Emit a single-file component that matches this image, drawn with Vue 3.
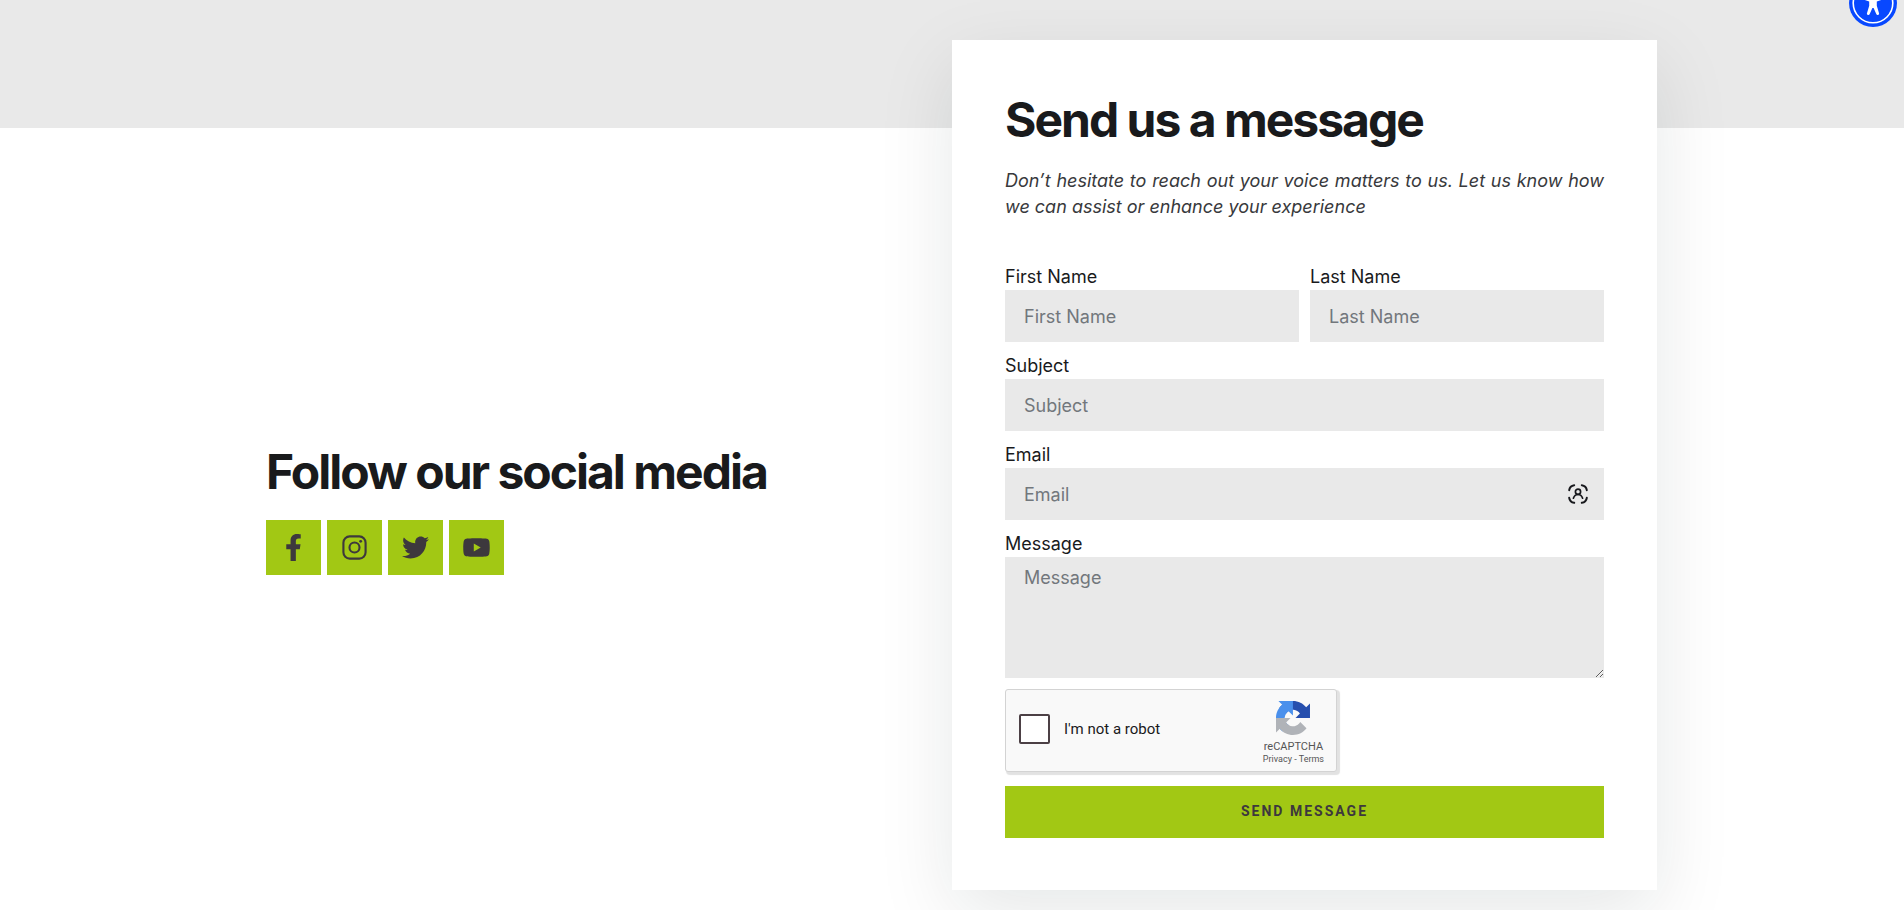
<script setup>
import { reactive, ref } from 'vue';

const form = reactive({
    firstName: '',
    lastName: '',
    subject: '',
    email: '',
    message: '',
});

const notRobot = ref(false);

const socials = [
    {
        name: 'Facebook',
        viewBox: '0 0 320 512',
        path: 'M279.14 288l14.22-92.66h-88.91v-60.13c0-25.35 12.42-50.06 52.24-50.06h40.42V6.26S260.43 0 225.36 0c-73.22 0-121.08 44.38-121.08 124.72v70.62H22.89V288h81.39v224h100.17V288z',
    },
    { name: 'Instagram', viewBox: '0 0 28 28' },
    {
        name: 'Twitter',
        viewBox: '0 0 512 512',
        path: 'M459.37 151.716c.325 4.548.325 9.097.325 13.645 0 138.72-105.583 298.558-298.558 298.558-59.452 0-114.68-17.219-161.137-47.106 8.447.974 16.568 1.299 25.34 1.299 49.055 0 94.213-16.568 130.274-44.832-46.132-.975-84.792-31.188-98.112-72.772 6.498.974 12.995 1.624 19.818 1.624 9.421 0 18.843-1.3 27.614-3.573-48.081-9.747-84.143-51.98-84.143-102.985v-1.299c13.969 7.797 30.214 12.67 47.431 13.319-28.264-18.843-46.781-51.005-46.781-87.391 0-19.492 5.197-37.36 14.294-52.954 51.655 63.675 129.3 105.258 216.365 109.807-1.624-7.797-2.599-15.918-2.599-24.04 0-57.828 46.782-104.934 104.934-104.934 30.213 0 57.502 12.67 76.67 33.137 23.715-4.548 46.456-13.32 66.599-25.34-7.798 24.366-24.366 44.833-46.132 57.827 21.117-2.273 41.584-8.122 60.426-16.243-14.292 20.791-32.161 39.308-52.628 54.253z',
    },
    {
        name: 'YouTube',
        viewBox: '10 0 556 512',
        path: 'M549.655 124.083c-6.281-23.65-24.787-42.276-48.284-48.597C458.781 64 288 64 288 64S117.22 64 74.629 75.486c-23.497 6.322-42.003 24.947-48.284 48.597-11.412 42.867-11.412 132.305-11.412 132.305s0 89.438 11.412 132.305c6.281 23.65 24.787 41.5 48.284 47.821C117.22 448 288 448 288 448s170.78 0 213.371-11.486c23.497-6.321 42.003-24.171 48.284-47.821 11.412-42.867 11.412-132.305 11.412-132.305s0-89.438-11.412-132.305zm-317.51 213.508V175.185l142.739 81.205-142.739 81.201z',
    },
];
</script>

<template>
    <div class="page">
        <div class="band"></div>

        <main class="contact">
            <section class="follow">
                <h2 class="title">Follow our social media</h2>
                <nav class="socials">
                    <a
                        v-for="social in socials"
                        :key="social.name"
                        href="#"
                        class="social"
                        :aria-label="social.name"
                    >
                        <svg class="social-icon" :viewBox="social.viewBox" aria-hidden="true">
                            <path v-if="social.path" :d="social.path" fill="currentColor" />
                            <g v-else fill="none" stroke="currentColor" stroke-width="2.2">
                                <rect x="2.5" y="2.5" width="23" height="23" rx="6.5" />
                                <circle cx="14" cy="14" r="5.2" />
                                <circle cx="20.4" cy="7.6" r="1.5" fill="currentColor" stroke="none" />
                            </g>
                        </svg>
                    </a>
                </nav>
            </section>

            <section class="card">
                <h2 class="title">Send us a message</h2>
                <p class="intro">
                    Don’t hesitate to reach out your voice matters to us. Let us know how we can assist or enhance your experience
                </p>

                <form class="form" @submit.prevent>
                    <div class="row">
                        <div class="field">
                            <label for="first-name">First Name</label>
                            <input id="first-name" v-model="form.firstName" class="control" type="text" placeholder="First Name">
                        </div>
                        <div class="field">
                            <label for="last-name">Last Name</label>
                            <input id="last-name" v-model="form.lastName" class="control" type="text" placeholder="Last Name">
                        </div>
                    </div>
                    <div class="field">
                        <label for="subject">Subject</label>
                        <input id="subject" v-model="form.subject" class="control" type="text" placeholder="Subject">
                    </div>
                    <div class="field">
                        <label for="email">Email</label>
                        <div class="control-wrap">
                            <input id="email" v-model="form.email" class="control" type="email" placeholder="Email">
                            <svg class="autofill" viewBox="0 0 20 20" fill="none" stroke="#17181c" stroke-width="2" stroke-linecap="round" aria-hidden="true">
                                <path d="M1.2 6.2C1.6 3.4 3.4 1.6 6.2 1.2M13.8 1.2c2.8.4 4.6 2.2 5 5M18.8 13.8c-.4 2.8-2.2 4.6-5 5M6.2 18.8c-2.8-.4-4.6-2.2-5-5" />
                                <circle cx="10" cy="7.8" r="2.6" stroke-width="1.7" />
                                <path d="M5.4 14.2c.8-2.4 2.4-3.7 4.6-3.7s3.8 1.3 4.6 3.7" stroke-width="1.7" />
                            </svg>
                        </div>
                    </div>
                    <div class="field">
                        <label for="message">Message</label>
                        <textarea id="message" v-model="form.message" class="control control-area" placeholder="Message"></textarea>
                    </div>

                    <div class="captcha">
                        <input id="not-robot" v-model="notRobot" class="captcha-check" type="checkbox">
                        <label for="not-robot" class="captcha-label">I'm not a robot</label>
                        <div class="captcha-brand">
                            <svg class="captcha-logo" viewBox="0 0 64 64" aria-hidden="true">
                                <path fill="#264fae" d="M64 31.955l-.033-1.37V4.687l-7.16 7.16C50.948 4.674 42.033.093 32.05.093c-10.4 0-19.622 4.96-25.458 12.64l11.736 11.86a15.55 15.55 0 0 1 4.754-5.334c2.05-1.6 4.952-2.906 8.968-2.906.485 0 .86.057 1.135.163 4.976.393 9.288 3.14 11.828 7.124l-8.307 8.307L64 31.953" />
                                <path fill="#4a90ec" d="M31.862.094l-1.37.033H4.594l7.16 7.16C4.58 13.147 0 22.06 0 32.046c0 10.4 4.96 19.622 12.64 25.458L24.5 45.768a15.55 15.55 0 0 1-5.334-4.754c-1.6-2.05-2.906-4.952-2.906-8.968 0-.485.057-.86.163-1.135.393-4.976 3.14-9.288 7.124-11.828l8.307 8.307L31.86.095" />
                                <path fill="#b0b3b8" d="M.001 32.045l.033 1.37v25.898l7.16-7.16c5.86 7.173 14.774 11.754 24.76 11.754 10.4 0 19.622-4.96 25.458-12.64l-11.736-11.86a15.55 15.55 0 0 1-4.754 5.334c-2.05 1.6-4.952 2.906-8.968 2.906-.485 0-.86-.057-1.135-.163-4.976-.393-9.288-3.14-11.828-7.124l8.307-8.307c-10.522.04-22.4.066-27.295-.005" />
                            </svg>
                            <span class="captcha-name">reCAPTCHA</span>
                            <span class="captcha-links"><a href="#">Privacy</a> - <a href="#">Terms</a></span>
                        </div>
                    </div>

                    <button class="submit" type="submit">Send Message</button>
                </form>
            </section>
        </main>

        <button class="accessibility" type="button" aria-label="Accessibility">
            <svg viewBox="0 0 48 48" aria-hidden="true">
                <circle cx="24" cy="24" r="24" fill="#0848ff" />
                <circle cx="24" cy="24" r="19.8" fill="none" stroke="#fff" stroke-width="1.6" />
                <circle cx="24" cy="13.5" r="3" fill="#fff" />
                <path fill="#fff" d="M15.5 18.2l6 1.2h5l6-1.2c1.4-.2 1.8 2.2.4 2.6l-5.1 1.6v4.4l2.3 7.6c.3 1.4-2 2.2-2.7.9L24.6 29h-1.2l-2.8 6.3c-.7 1.3-3 .5-2.7-.9l2.3-7.6v-4.4l-5.1-1.6c-1.4-.4-1-2.8.4-2.6z" />
            </svg>
        </button>
    </div>
</template>

<style>
body {
    margin: 0;
    background: #ffffff;
}
</style>

<style scoped>
.page {
    font-family: Inter, sans-serif;
    font-size: 18px;
    line-height: 27px;
    color: #191a1c;
    padding-bottom: 20px;
}
.page * {
    box-sizing: border-box;
}
.band {
    height: 128px;
    background: #e9e9e9;
}
.contact {
    display: grid;
    grid-template-columns: 1fr 1fr;
    align-items: center;
    max-width: 1410px;
    margin: 0 auto;
}
.follow {
    padding-left: 19px;
}
.title {
    margin: 0;
    font-size: 48px;
    font-weight: 700;
    line-height: 56px;
    letter-spacing: -2px;
}
.socials {
    display: flex;
    gap: 6px;
    margin-top: 20px;
}
.social {
    display: flex;
    align-items: center;
    justify-content: center;
    width: 55px;
    height: 55px;
    background: #a2c814;
    color: #3d383d;
}
.social-icon {
    width: 27px;
    height: 27px;
}
.card {
    position: relative;
    margin-top: -88px;
    padding: 52px 53px;
    background: #ffffff;
    box-shadow: 0 24px 72px rgba(10, 31, 26, 0.1);
}
.intro {
    margin: 20px 0 0;
    font-style: italic;
    line-height: 26px;
    text-align: justify;
    color: #38393c;
}
.form {
    display: flex;
    flex-direction: column;
    gap: 10px;
    margin-top: 43px;
}
.row {
    display: grid;
    grid-template-columns: 1fr 1fr;
    gap: 11px;
}
.field {
    display: flex;
    flex-direction: column;
}
.control {
    display: block;
    width: 100%;
    height: 52px;
    padding: 0 19px;
    border: 0;
    border-radius: 0;
    background: #e9e9e9;
    font: inherit;
    color: #191a1c;
}
.control::placeholder {
    color: #72777c;
    opacity: 1;
}
.control-area {
    height: 121px;
    padding-top: 7px;
    resize: vertical;
}
.control-wrap {
    position: relative;
}
.autofill {
    position: absolute;
    top: 16px;
    right: 16px;
    width: 20px;
    height: 20px;
}
.captcha {
    display: flex;
    align-items: center;
    width: 332px;
    height: 83px;
    margin: 1px 0 4px;
    padding: 0 12px 3px 13px;
    border: 1px solid #d3d3d3;
    border-radius: 3px;
    background: #f9f9f9;
    box-shadow: 2px 2px 1px 1px #e2e2e2;
    font-family: Roboto, sans-serif;
}
.captcha-check {
    appearance: none;
    width: 31px;
    height: 30px;
    margin: 0 14px 0 0;
    border: 2px solid #4c4045;
    border-radius: 2px;
    background: #ffffff;
}
.captcha-label {
    font-size: 15px;
    line-height: 20px;
}
.captcha-brand {
    display: flex;
    flex-direction: column;
    align-items: center;
    margin-left: auto;
    padding-top: 8px;
    color: #555555;
}
.captcha-logo {
    width: 34px;
    height: 34px;
    margin-bottom: 5px;
}
.captcha-name {
    font-size: 11px;
    line-height: 14px;
}
.captcha-links {
    font-size: 9px;
    line-height: 11px;
}
.captcha-links a {
    color: inherit;
    text-decoration: none;
}
.submit {
    height: 52px;
    padding: 0 0 2px;
    border: 0;
    background: #a2c814;
    font-family: Roboto, sans-serif;
    font-size: 14px;
    font-weight: 700;
    letter-spacing: 2px;
    text-transform: uppercase;
    color: #3d383d;
    cursor: pointer;
}
.accessibility {
    position: fixed;
    top: -21px;
    right: 7px;
    width: 48px;
    height: 48px;
    padding: 0;
    border: 0;
    border-radius: 50%;
    background: none;
    cursor: pointer;
}
.accessibility svg {
    display: block;
}
</style>
